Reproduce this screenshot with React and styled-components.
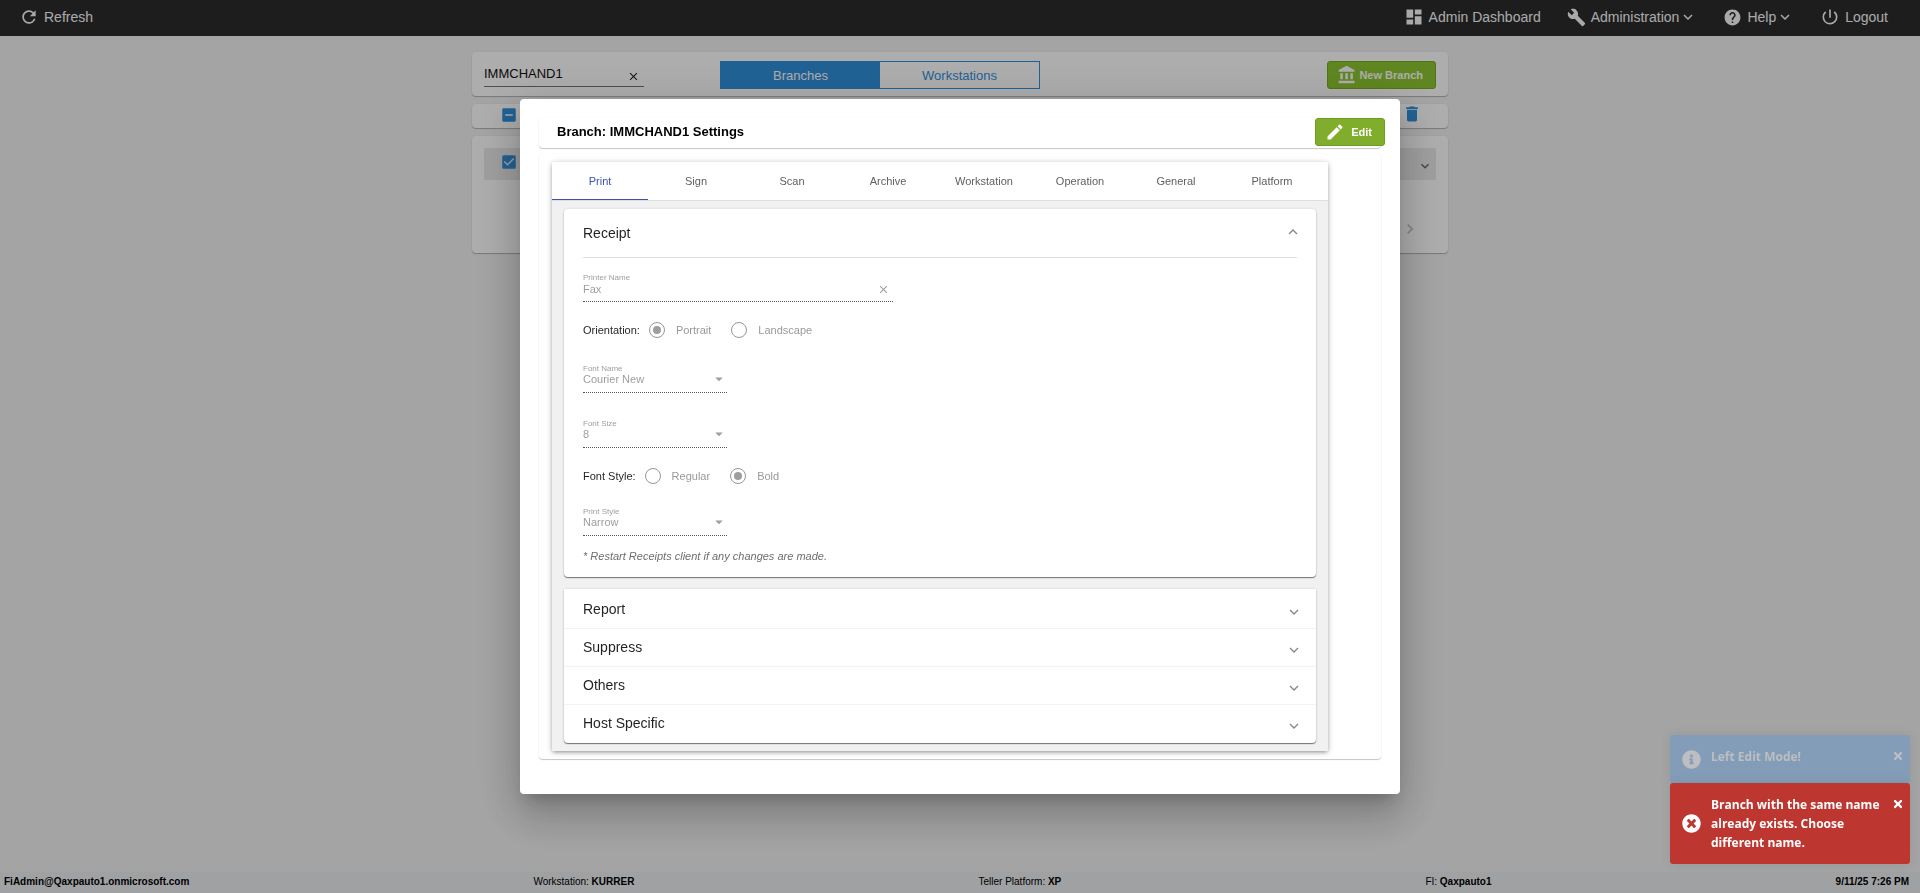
// src/App.jsx
import React from 'react';
import styled, { createGlobalStyle } from 'styled-components';
import {
  MdRefresh,
  MdDashboard,
  MdHelp,
  MdPowerSettingsNew,
  MdKeyboardArrowDown,
  MdChevronRight,
  MdClose,
  MdDelete,
  MdEdit,
  MdCheckBox,
  MdIndeterminateCheckBox,
  MdArrowDropDown,
} from 'react-icons/md';
import { FaInfoCircle, FaTimesCircle, FaTimes } from 'react-icons/fa';

const GlobalStyle = createGlobalStyle`
  *, *::before, *::after {
    box-sizing: border-box;
  }
  body {
    margin: 0;
    background: #f2f2f2;
    color: rgba(0, 0, 0, 0.87);
    font-family: 'Liberation Sans', Arial, sans-serif;
    font-size: 11px;
  }
  button, input, select {
    font-family: inherit;
    margin: 0;
  }
  h1, h2, h3, p {
    margin: 0;
  }
  svg {
    display: block;
    flex: none;
  }
`;

const Page = styled.div`
  display: flex;
  flex-direction: column;
  min-height: 100vh;
`;

/* ---------- top bar ---------- */
const TopBar = styled.header`
  display: flex;
  justify-content: space-between;
  align-items: center;
  height: 36px;
  padding: 0 32px 2px 19px;
  background: #2c2c2c;
`;

const TopNav = styled.nav`
  display: flex;
  gap: 26px;
`;

const TopButton = styled.button`
  display: flex;
  align-items: center;
  padding: 0;
  border: 0;
  background: none;
  color: #fafafa;
  font-size: 14px;
  line-height: 20px;

  span {
    margin-left: 5px;
  }
`;

/* ---------- branch list ---------- */
const Main = styled.main`
  flex: 1;
  display: flex;
  flex-direction: column;
  gap: 8px;
  width: 100%;
  max-width: 976px;
  margin: 0 auto;
  padding: 16px 0;
`;

const Card = styled.section`
  background: #fff;
  border-radius: 4px;
  box-shadow: 0 1px 1px rgba(0, 0, 0, 0.25), 0 0 2px rgba(0, 0, 0, 0.08);
`;

const SearchCard = styled(Card)`
  display: flex;
  align-items: center;
  height: 44px;
  padding: 1px 12px 0;
`;

const SearchField = styled.div`
  display: flex;
  align-items: center;
  width: 160px;
  height: 24px;
  margin-right: 76px;
  border-bottom: 1px solid #757575;

  input {
    flex: 1;
    min-width: 0;
    padding: 0 0 2px;
    border: 0;
    outline: 0;
    background: none;
    font-size: 13px;
    color: #111;
  }
`;

const IconButton = styled.button`
  display: flex;
  padding: 0;
  border: 0;
  background: none;
  color: ${(p) => p.$color || '#222'};
`;

const ClearButton = styled(IconButton)`
  padding: 5px 4px 0;
`;

const Toggle = styled.div`
  display: flex;
  width: 320px;
  height: 28px;
  border: 1px solid #3090dc;
`;

const ToggleButton = styled.button`
  flex: 1;
  padding: 1px 0 0;
  border: 0;
  font-size: 13px;
  background: ${(p) => (p.$active ? '#3090dc' : 'transparent')};
  color: ${(p) => (p.$active ? '#fff' : '#3090dc')};
`;

const GreenButton = styled.button`
  display: flex;
  align-items: center;
  justify-content: space-between;
  width: ${(p) => p.$width};
  height: 28px;
  margin-left: auto;
  padding: 0 12px 0 9px;
  border: 1px solid ${(p) => (p.$dark ? '#6f9d1f' : '#79ab21')};
  border-radius: 3px;
  background: ${(p) => (p.$dark ? '#80ae2c' : '#8dc630')};
  color: #fff;
  font-size: 11px;
  font-weight: bold;
`;

const SelectionBar = styled(Card)`
  display: flex;
  justify-content: space-between;
  height: 24px;
  padding: 0 26px 0 28px;
`;

const CheckLabel = styled.label`
  position: relative;
  display: flex;
  width: 18px;
  height: 20px;
  padding-top: 2px;
  color: #3090dc;

  input {
    position: absolute;
    inset: 0;
    width: 18px;
    height: 18px;
    opacity: 0;
  }
`;

const ListCard = styled(Card)`
  display: flex;
  flex-direction: column;
  height: 117px;
  padding: 12px;
`;

const BranchRow = styled.div`
  display: flex;
  justify-content: space-between;
  height: 32px;
  padding: 3px 3px 0 16px;
  background: #ebebeb;

  button {
    padding-top: 7px;
  }
`;

const Pager = styled.div`
  display: flex;
  justify-content: flex-end;
  margin-top: 39px;
  padding-right: 16px;
`;

/* ---------- footer ---------- */
const Footer = styled.footer`
  display: flex;
  align-items: center;
  justify-content: space-between;
  height: 21px;
  padding: 0 11px 2px 4px;
  background: #ebedf0;
  color: #000;
  font-size: 10px;
`;

const Platform = styled.span`
  padding-right: 20px;
`;

/* ---------- dialog ---------- */
const Backdrop = styled.div`
  position: fixed;
  inset: 0;
  display: flex;
  align-items: center;
  justify-content: center;
  background: rgba(0, 0, 0, 0.32);
`;

const Dialog = styled.div`
  width: 880px;
  max-width: 90vw;
  padding: 19px 19px 35px;
  border-radius: 4px;
  background: #fff;
  box-shadow: 0 11px 15px -7px rgba(0, 0, 0, 0.2), 0 24px 38px 3px rgba(0, 0, 0, 0.14),
    0 9px 46px 8px rgba(0, 0, 0, 0.12);
`;

const DialogHeader = styled(Card)`
  display: flex;
  align-items: flex-start;
  height: 30px;
  margin-bottom: 6px;
  padding-left: 18px;
  box-shadow: 0 1px 1px rgba(0, 0, 0, 0.22), 0 0 2px rgba(0, 0, 0, 0.06);

  h1 {
    font-size: 13px;
    line-height: 28px;
    color: #000;
  }
  button {
    margin-right: -4px;
  }
`;

const DialogContent = styled(Card)`
  padding: 8px 53px 8px 13px;
  box-shadow: 0 1px 1px rgba(0, 0, 0, 0.22), 0 0 2px rgba(0, 0, 0, 0.06);
`;

const TabGroup = styled.div`
  background: #f1f1f1;
  box-shadow: 0 2px 4px -1px rgba(0, 0, 0, 0.3), 0 1px 6px rgba(0, 0, 0, 0.22);
`;

const TabList = styled.div`
  display: flex;
  background: #fff;
  border-bottom: 1px solid #dedede;
`;

const Tab = styled.button`
  width: 96px;
  height: 38px;
  padding: 1px 0 0;
  border: 0;
  border-bottom: 1px solid ${(p) => (p.$active ? '#3f51b5' : 'transparent')};
  background: none;
  color: ${(p) => (p.$active ? '#3f51b5' : '#606060')};
  font-size: 11px;
`;

const TabBody = styled.div`
  display: flex;
  flex-direction: column;
  gap: 12px;
  padding: 8px 12px;
`;

const Panel = styled.section`
  border-radius: 4px;
  background: #fff;
  box-shadow: 0 1px 1px rgba(0, 0, 0, 0.5), 0 0 3px rgba(0, 0, 0, 0.12);
`;

const PanelHeader = styled.button`
  display: flex;
  align-items: center;
  justify-content: space-between;
  width: 100%;
  height: ${(p) => (p.$open ? '49px' : '38px')};
  padding: 0;
  border: 0;
  border-bottom: ${(p) => (p.$open ? '1px solid #dcdcdc' : '0')};
  background: none;
  color: rgba(0, 0, 0, 0.87);
  font-size: 14px;

  svg {
    margin: ${(p) => (p.$open ? '0 -1px 3px 0' : '6px 0 0')};
  }
`;

const ReceiptPanel = styled(Panel)`
  padding: 0 19px 14px;
`;

const ClosedPanels = styled(Panel)`
  display: flex;
  flex-direction: column;
  padding: 1px 0;
  border-radius: 0 0 4px 4px;
`;

const ClosedItem = styled.div`
  padding: 0 17px 0 19px;

  & + & {
    box-shadow: inset 0 1px 0 #f3f3f3;
  }
`;

const Field = styled.div`
  position: relative;
  display: flex;
  flex-direction: column;
  width: ${(p) => (p.$wide ? '310px' : '144px')};
  max-width: 100%;
  margin-top: ${(p) => p.$top};
  border-bottom: 1px dotted #555;
  color: #9e9e9e;

  label {
    font-size: 8px;
    line-height: 11px;
  }
  input, select {
    width: 100%;
    height: 18px;
    padding: 0 24px 7px 0;
    border: 0;
    outline: 0;
    appearance: none;
    background: none;
    color: #9e9e9e;
    font-size: 11px;
    line-height: 11px;
    opacity: 1;
  }
`;

const FieldIcon = styled.span`
  position: absolute;
  right: ${(p) => (p.$clear ? '3px' : '-1px')};
  bottom: ${(p) => (p.$clear ? '5px' : '4px')};
  pointer-events: none;
`;

const RadioRow = styled.div`
  display: flex;
  align-items: center;
  height: 16px;
  margin-top: 20px;
`;

const RadioTitle = styled.span`
  margin-right: 9px;
`;

const RadioLabel = styled.label`
  display: flex;
  align-items: center;
  gap: 11px;
  margin-right: 20px;
  color: #999;

  input {
    display: grid;
    place-items: center;
    width: 16px;
    height: 16px;
    appearance: none;
    border: 1px solid #969696;
    border-radius: 50%;
  }
  input:checked::before {
    content: '';
    width: 8px;
    height: 8px;
    border-radius: 50%;
    background: #9e9e9e;
  }
`;

const Note = styled.p`
  margin-top: 13px;
  color: #6e6e6e;
  font-style: italic;
  line-height: 14px;
`;

/* ---------- toasts ---------- */
const Toasts = styled.div`
  position: fixed;
  right: 10px;
  bottom: 29px;
  width: 240px;
`;

const Toast = styled.div`
  display: flex;
  align-items: center;
  gap: 10px;
  min-height: 48px;
  padding: 12px 6px 12px 12px;
  border-radius: 3px;
  background: ${(p) => (p.$error ? '#bd362f' : '#839db8')};
  color: ${(p) => (p.$error ? '#fff' : '#bcbec0')};
  box-shadow: 0 0 12px rgba(0, 0, 0, 0.08);

  p {
    flex: 1;
    align-self: flex-start;
    font-family: 'Open Sans', 'Noto Sans', sans-serif;
    font-size: 12px;
    font-weight: bold;
    line-height: 19px;
  }
`;

const ToastClose = styled(IconButton)`
  align-self: flex-start;
  padding-top: 3px;
  color: inherit;
`;

const tabs = ['Print', 'Sign', 'Scan', 'Archive', 'Workstation', 'Operation', 'General', 'Platform'];
const closedPanels = ['Report', 'Suppress', 'Others', 'Host Specific'];

const Chevron = ({ up }) => (
  <svg width="10" height="6" viewBox="0 0 10 6" fill="none" stroke="#858585" strokeWidth="1.3">
    <path d={up ? 'M1 5l4-4 4 4' : 'M1 1l4 4 4-4'} />
  </svg>
);

const WrenchIcon = () => (
  <svg width="19" height="19" viewBox="0 0 24 24" fill="currentColor">
    <path d="M22.7 19l-9.1-9.1c.9-2.3.4-5-1.5-6.9-2-2-5-2.4-7.4-1.3L9 6 6 9 1.6 4.7C.4 7.1.9 10.1 2.9 12.1c1.9 1.9 4.6 2.4 6.9 1.5l9.1 9.1c.4.4 1 .4 1.4 0l2.3-2.3c.5-.4.5-1.1.1-1.4z" />
  </svg>
);

const BankIcon = () => (
  <svg width="20" height="20" viewBox="0 0 24 24" fill="currentColor">
    <path d="M4 10v7h3v-7H4zm6 0v7h3v-7h-3zM2 22h19v-3H2v3zm14-12v7h3v-7h-3zm-4.5-9L2 6v2h19V6l-9.5-5z" />
  </svg>
);

const SelectField = ({ id, label, value, top }) => (
  <Field $top={top}>
    <label htmlFor={id}>{label}</label>
    <select id={id} defaultValue={value} disabled>
      <option>{value}</option>
    </select>
    <FieldIcon>
      <MdArrowDropDown size={18} />
    </FieldIcon>
  </Field>
);

const RadioGroup = ({ title, name, options, value }) => (
  <RadioRow role="radiogroup" aria-label={title}>
    <RadioTitle>{title}:</RadioTitle>
    {options.map((option) => (
      <RadioLabel key={option}>
        <input type="radio" name={name} defaultChecked={option === value} disabled />
        {option}
      </RadioLabel>
    ))}
  </RadioRow>
);

export default function App() {
  return (
    <>
      <GlobalStyle />
      <Page>
        <TopBar>
          <TopButton>
            <MdRefresh size={20} />
            <span>Refresh</span>
          </TopButton>
          <TopNav>
            <TopButton>
              <MdDashboard size={20} />
              <span>Admin Dashboard</span>
            </TopButton>
            <TopButton>
              <WrenchIcon />
              <span>Administration</span>
              <MdKeyboardArrowDown size={18} />
            </TopButton>
            <TopButton>
              <MdHelp size={19} />
              <span>Help</span>
              <MdKeyboardArrowDown size={18} />
            </TopButton>
            <TopButton>
              <MdPowerSettingsNew size={20} />
              <span>Logout</span>
            </TopButton>
          </TopNav>
        </TopBar>

        <Main>
          <SearchCard>
            <SearchField>
              <input type="text" aria-label="Search branches" defaultValue="IMMCHAND1" />
              <ClearButton aria-label="Clear search">
                <MdClose size={13} />
              </ClearButton>
            </SearchField>
            <Toggle>
              <ToggleButton $active>Branches</ToggleButton>
              <ToggleButton>Workstations</ToggleButton>
            </Toggle>
            <GreenButton $width="109px">
              <BankIcon />
              New Branch
            </GreenButton>
          </SearchCard>

          <SelectionBar>
            <CheckLabel>
              <input type="checkbox" aria-label="Select all branches" />
              <MdIndeterminateCheckBox size={18} />
            </CheckLabel>
            <IconButton $color="#3090dc" aria-label="Delete selected">
              <MdDelete size={20} />
            </IconButton>
          </SelectionBar>

          <ListCard>
            <BranchRow>
              <CheckLabel>
                <input type="checkbox" aria-label="Select IMMCHAND1" defaultChecked />
                <MdCheckBox size={18} />
              </CheckLabel>
              <IconButton $color="#666" aria-label="Expand branch">
                <MdKeyboardArrowDown size={16} />
              </IconButton>
            </BranchRow>
            <Pager>
              <IconButton $color="#c4c4c4" aria-label="Next page">
                <MdChevronRight size={20} />
              </IconButton>
            </Pager>
          </ListCard>
        </Main>

        <Footer>
          <strong>FiAdmin@Qaxpauto1.onmicrosoft.com</strong>
          <span>Workstation: <strong>KURRER</strong></span>
          <Platform>Teller Platform: <strong>XP</strong></Platform>
          <span>FI: <strong>Qaxpauto1</strong></span>
          <strong>9/11/25 7:26 PM</strong>
        </Footer>
      </Page>

      <Backdrop>
        <Dialog role="dialog" aria-labelledby="dialog-title">
          <DialogHeader as="div">
            <h1 id="dialog-title">Branch: IMMCHAND1 Settings</h1>
            <GreenButton $width="70px" $dark>
              <MdEdit size={20} />
              Edit
            </GreenButton>
          </DialogHeader>

          <DialogContent>
            <TabGroup>
              <TabList role="tablist">
                {tabs.map((tab, i) => (
                  <Tab key={tab} role="tab" aria-selected={i === 0} $active={i === 0}>
                    {tab}
                  </Tab>
                ))}
              </TabList>

              <TabBody role="tabpanel">
                <ReceiptPanel>
                  <PanelHeader $open aria-expanded="true">
                    Receipt
                    <Chevron up />
                  </PanelHeader>
                  <Field $wide $top="14px">
                    <label htmlFor="printer-name">Printer Name</label>
                    <input id="printer-name" type="text" defaultValue="Fax" disabled />
                    <FieldIcon $clear>
                      <MdClose size={13} />
                    </FieldIcon>
                  </Field>
                  <RadioGroup
                    title="Orientation"
                    name="orientation"
                    options={['Portrait', 'Landscape']}
                    value="Portrait"
                  />
                  <SelectField id="font-name" label="Font Name" value="Courier New" top="25px" />
                  <SelectField id="font-size" label="Font Size" value="8" top="25px" />
                  <RadioGroup
                    title="Font Style"
                    name="font-style"
                    options={['Regular', 'Bold']}
                    value="Bold"
                  />
                  <SelectField id="print-style" label="Print Style" value="Narrow" top="22px" />
                  <Note>* Restart Receipts client if any changes are made.</Note>
                </ReceiptPanel>

                <ClosedPanels>
                  {closedPanels.map((title) => (
                    <ClosedItem key={title}>
                      <PanelHeader aria-expanded="false">
                        {title}
                        <Chevron />
                      </PanelHeader>
                    </ClosedItem>
                  ))}
                </ClosedPanels>
              </TabBody>
            </TabGroup>
          </DialogContent>
        </Dialog>
      </Backdrop>

      <Toasts>
        <Toast>
          <FaInfoCircle size={19} />
          <p>Left Edit Mode!</p>
          <ToastClose aria-label="Close">
            <FaTimes size={12} />
          </ToastClose>
        </Toast>
        <Toast $error>
          <FaTimesCircle size={19} />
          <p>Branch with the same name already exists. Choose different name.</p>
          <ToastClose aria-label="Close">
            <FaTimes size={12} />
          </ToastClose>
        </Toast>
      </Toasts>
    </>
  );
}
